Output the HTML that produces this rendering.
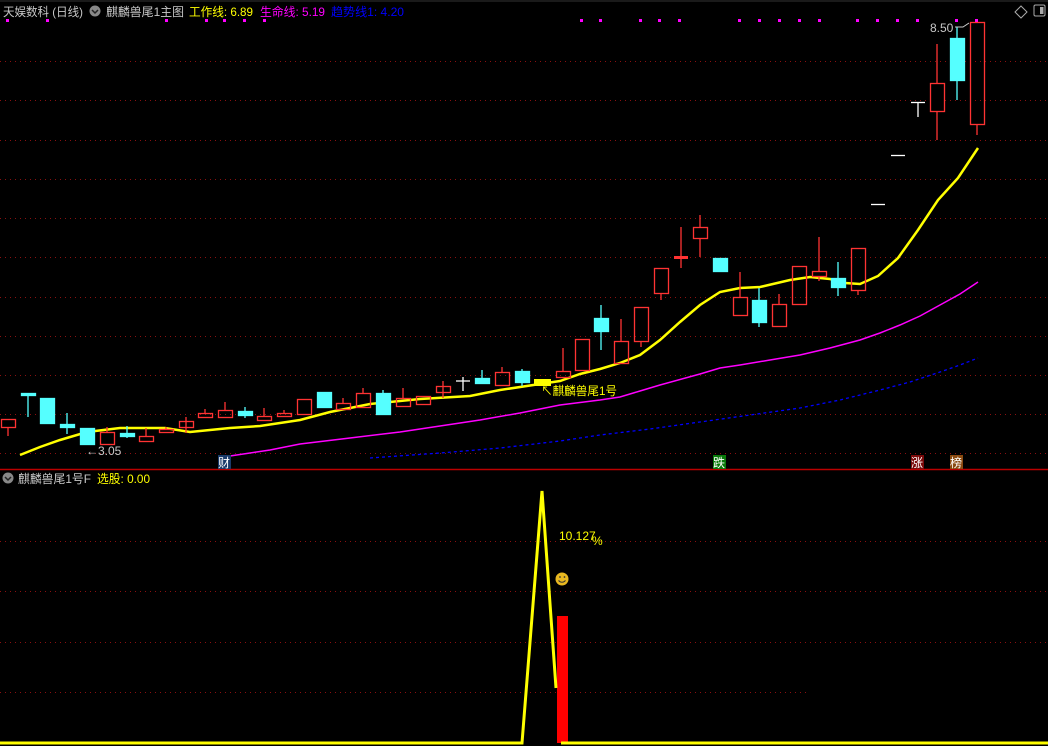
<!DOCTYPE html>
<html><head><meta charset="utf-8"><style>
html,body{margin:0;padding:0;background:#000;width:1048px;height:746px;overflow:hidden}
svg{display:block}
text{font-family:"Liberation Sans","Noto Sans CJK SC",sans-serif}
</style></head><body>
<svg width="1048" height="746" viewBox="0 0 1048 746" xmlns="http://www.w3.org/2000/svg">
<rect width="1048" height="746" fill="#000"/>
<line x1="0" y1="1" x2="1048" y2="1" stroke="#333" stroke-width="1"/>
<g stroke="#8a1010" stroke-width="1" stroke-dasharray="1 4">
<line x1="0" y1="61.5" x2="1048" y2="61.5"/><line x1="0" y1="100.5" x2="1048" y2="100.5"/><line x1="0" y1="140.5" x2="1048" y2="140.5"/><line x1="0" y1="179.5" x2="1048" y2="179.5"/><line x1="0" y1="218.5" x2="1048" y2="218.5"/><line x1="0" y1="257.5" x2="1048" y2="257.5"/><line x1="0" y1="297.5" x2="1048" y2="297.5"/><line x1="0" y1="336.5" x2="1048" y2="336.5"/><line x1="0" y1="375.5" x2="1048" y2="375.5"/><line x1="0" y1="414.5" x2="1048" y2="414.5"/><line x1="0" y1="453.5" x2="1048" y2="453.5"/>
<line x1="0" y1="541.5" x2="1048" y2="541.5"/><line x1="0" y1="591.5" x2="1048" y2="591.5"/><line x1="0" y1="642.5" x2="1048" y2="642.5"/><line x1="0" y1="692.5" x2="810" y2="692.5"/>
</g>
<line x1="0" y1="469.5" x2="1048" y2="469.5" stroke="#b00" stroke-width="1.5"/>

<!-- header -->
<text x="3" y="16" font-size="12" fill="#c8c8c8" textLength="80" lengthAdjust="spacingAndGlyphs">天娱数科 (日线)</text>
<circle cx="95" cy="11" r="5.5" fill="#888"/><path d="M92 10 l3 3 l3 -3" stroke="#222" stroke-width="1.5" fill="none"/>
<text x="106" y="16" font-size="12" fill="#c8c8c8" textLength="78" lengthAdjust="spacingAndGlyphs">麒麟兽尾1主图</text>
<text x="189" y="16" font-size="12" fill="#ffff00" textLength="64" lengthAdjust="spacingAndGlyphs">工作线: 6.89</text>
<text x="260" y="16" font-size="12" fill="#ff00ff" textLength="65" lengthAdjust="spacingAndGlyphs">生命线: 5.19</text>
<text x="331" y="16" font-size="12" fill="#0000ff" textLength="73" lengthAdjust="spacingAndGlyphs">趋势线1: 4.20</text>
<g fill="#ff00ff">
<rect x="6" y="19" width="3" height="3"/><rect x="46" y="19" width="3" height="3"/><rect x="165" y="19" width="3" height="3"/><rect x="205" y="19" width="3" height="3"/><rect x="223" y="19" width="3" height="3"/><rect x="243" y="19" width="3" height="3"/><rect x="263" y="19" width="3" height="3"/>
<rect x="580" y="19" width="3" height="3"/><rect x="599" y="19" width="3" height="3"/><rect x="639" y="19" width="3" height="3"/><rect x="658" y="19" width="3" height="3"/><rect x="678" y="19" width="3" height="3"/><rect x="738" y="19" width="3" height="3"/><rect x="758" y="19" width="3" height="3"/><rect x="778" y="19" width="3" height="3"/><rect x="798" y="19" width="3" height="3"/><rect x="818" y="19" width="3" height="3"/><rect x="856" y="19" width="3" height="3"/><rect x="876" y="19" width="3" height="3"/><rect x="896" y="19" width="3" height="3"/><rect x="916" y="19" width="3" height="3"/><rect x="955" y="19" width="3" height="3"/><rect x="975" y="19" width="3" height="3"/>
</g>
<path d="M1021 6 l6 6 l-6 6 l-6 -6z" stroke="#aaa" fill="none"/>
<rect x="1034" y="5" width="11" height="11" rx="1.5" stroke="#aaa" fill="none"/><rect x="1040" y="7" width="3.5" height="7" fill="#aaa"/>

<!-- lines -->
<polyline fill="none" stroke="#0000ff" stroke-width="1.3" stroke-dasharray="3 3" points="370,458 440,453 500,448 560,441 600,435 650,429 700,422 750,415 800,408 840,400 880,390 910,382 940,372 960,365 978,358"/>
<polyline fill="none" stroke="#ff00ff" stroke-width="1.5" points="230,456 270,450 300,444 350,438 400,432 440,426 480,420 520,413 560,405 600,400 620,397 640,391 660,385 700,374 720,368 740,365 770,360 800,355 830,348 860,340 880,333 900,325 920,316 940,305 960,294 978,282"/>
<polyline fill="none" stroke="#ffff00" stroke-width="2.5" points="20,455 40,447 60,440 87,432 120,428 165,428 190,432 230,428 260,426 300,420 330,412 370,404 420,399 470,396 500,390 540,384 560,381 580,374 600,369 620,363 640,355 660,340 680,322 700,305 720,292 740,288 760,287 790,280 810,277 830,279 845,283 860,284 878,276 898,258 918,230 938,200 958,178 978,148"/>

<!-- candles -->
<g stroke-width="1.3">
<g stroke="#ff3333" fill="none">
<line x1="8" y1="428" x2="8" y2="436"/><rect x="1.5" y="419.5" width="14" height="8"/>
<line x1="107" y1="427" x2="107" y2="432"/><rect x="100.5" y="432.5" width="14" height="12"/>
<line x1="146" y1="428" x2="146" y2="436"/><rect x="139.5" y="436.5" width="14" height="5"/>
<line x1="166" y1="427" x2="166" y2="429"/><rect x="159.5" y="429.5" width="14" height="3"/>
<line x1="186" y1="417" x2="186" y2="433"/><rect x="179.5" y="421.5" width="14" height="6"/>
<line x1="205" y1="409" x2="205" y2="413"/><rect x="198.5" y="413.5" width="14" height="4"/>
<line x1="225" y1="402" x2="225" y2="410"/><rect x="218.5" y="410.5" width="14" height="7"/>
<line x1="264" y1="408" x2="264" y2="416"/><rect x="257.5" y="416.5" width="14" height="4"/>
<line x1="284" y1="410" x2="284" y2="413"/><rect x="277.5" y="413.5" width="14" height="3"/>
<rect x="297.5" y="399.5" width="14" height="15"/>
<line x1="343" y1="398" x2="343" y2="403"/><rect x="336.5" y="403.5" width="14" height="6"/>
<line x1="363" y1="388" x2="363" y2="393"/><rect x="356.5" y="393.5" width="14" height="14"/>
<line x1="403" y1="388" x2="403" y2="398"/><rect x="396.5" y="398.5" width="14" height="8"/>
<rect x="416.5" y="396.5" width="14" height="8"/>
<line x1="443" y1="381" x2="443" y2="398"/><rect x="436.5" y="386.5" width="14" height="6"/>
<line x1="502" y1="367" x2="502" y2="372"/><rect x="495.5" y="372.5" width="14" height="13"/>
<line x1="563" y1="348" x2="563" y2="371"/><rect x="556.5" y="371.5" width="14" height="6"/>
<rect x="575.5" y="339.5" width="14" height="31"/>
<line x1="621" y1="319" x2="621" y2="341"/><rect x="614.5" y="341.5" width="14" height="22"/>
<line x1="641" y1="341" x2="641" y2="347"/><rect x="634.5" y="307.5" width="14" height="34"/>
<line x1="661" y1="293" x2="661" y2="300"/><rect x="654.5" y="268.5" width="14" height="25"/>
<line x1="681" y1="227" x2="681" y2="268"/>
<line x1="700" y1="215" x2="700" y2="257"/><rect x="693.5" y="227.5" width="14" height="11" fill="#000"/>
<line x1="740" y1="272" x2="740" y2="297"/><rect x="733.5" y="297.5" width="14" height="18"/>
<line x1="779" y1="294" x2="779" y2="304"/><rect x="772.5" y="304.5" width="14" height="22"/>
<rect x="792.5" y="266.5" width="14" height="38"/>
<line x1="819" y1="237" x2="819" y2="281"/><rect x="812.5" y="271.5" width="14" height="5" fill="#000"/>
<line x1="858" y1="290" x2="858" y2="295"/><rect x="851.5" y="248.5" width="14" height="42"/>
<line x1="937" y1="44" x2="937" y2="140"/><rect x="930.5" y="83.5" width="14" height="28" fill="#000"/>
<line x1="977" y1="124" x2="977" y2="135"/><rect x="970.5" y="22.5" width="14" height="102"/>
</g>
<rect x="674" y="256" width="14" height="3" fill="#ff3333"/>
<g fill="#55ffff" stroke="#55ffff">
<line x1="28" y1="396" x2="28" y2="417"/><rect x="21.5" y="393.5" width="14" height="2"/>
<rect x="40.5" y="398.5" width="14" height="25"/>
<line x1="67" y1="413" x2="67" y2="434"/><rect x="60.5" y="424.5" width="14" height="3"/>
<rect x="80.5" y="428.5" width="14" height="16"/>
<line x1="127" y1="426" x2="127" y2="438"/><rect x="120.5" y="433.5" width="14" height="3"/>
<line x1="245" y1="407" x2="245" y2="418"/><rect x="238.5" y="411.5" width="14" height="4"/>
<rect x="317.5" y="392.5" width="14" height="15"/>
<line x1="383" y1="390" x2="383" y2="415"/><rect x="376.5" y="393.5" width="14" height="21"/>
<line x1="482" y1="370" x2="482" y2="378"/><rect x="475.5" y="378.5" width="14" height="5"/>
<line x1="522" y1="369" x2="522" y2="386"/><rect x="515.5" y="371.5" width="14" height="11"/>
<line x1="601" y1="305" x2="601" y2="350"/><rect x="594.5" y="318.5" width="14" height="13"/>
<rect x="713.5" y="258.5" width="14" height="13"/>
<line x1="759" y1="288" x2="759" y2="327"/><rect x="752.5" y="300.5" width="14" height="22"/>
<line x1="838" y1="262" x2="838" y2="296"/><rect x="831.5" y="278.5" width="14" height="9"/>
<line x1="957" y1="27" x2="957" y2="100"/><rect x="950.5" y="38.5" width="14" height="42"/>
</g>
<g stroke="#fff">
<line x1="463" y1="377" x2="463" y2="391"/><line x1="456" y1="381" x2="470" y2="381"/>
<line x1="871" y1="204.5" x2="885" y2="204.5"/>
<line x1="891" y1="155.5" x2="905" y2="155.5"/>
<line x1="911" y1="102.5" x2="925" y2="102.5"/><line x1="918" y1="102" x2="918" y2="117"/>
</g>
<rect x="534" y="379" width="17" height="7" fill="#ffff00"/>
</g>
<text x="541" y="395" font-size="12" fill="#ffff00" textLength="76" lengthAdjust="spacingAndGlyphs">↖麒麟兽尾1号</text>
<text x="86" y="455" font-size="12" fill="#c8c8c8">←3.05</text>
<text x="930" y="32" font-size="12" fill="#c8c8c8">8.50</text>
<path d="M955 27 h8 l6 -4" stroke="#ccc" fill="none"/>
<rect x="218" y="455" width="13" height="14" fill="#1a3a6a"/><text x="218" y="467" font-size="12" fill="#fff">财</text>
<rect x="713" y="455" width="13" height="14" fill="#0a7a0a"/><text x="713" y="467" font-size="12" fill="#fff">跌</text>
<rect x="911" y="455" width="13" height="14" fill="#7a0a0a"/><text x="911" y="467" font-size="12" fill="#fff">涨</text>
<rect x="950" y="455" width="13" height="14" fill="#8a4a10"/><text x="950" y="467" font-size="12" fill="#fff">榜</text>

<!-- lower pane -->
<circle cx="8" cy="478" r="5.5" fill="#888"/><path d="M5 477 l3 3 l3 -3" stroke="#222" stroke-width="1.5" fill="none"/>
<text x="18" y="483" font-size="12" fill="#c8c8c8" textLength="73" lengthAdjust="spacingAndGlyphs">麒麟兽尾1号F</text>
<text x="97" y="483" font-size="12" fill="#ffff00" textLength="53" lengthAdjust="spacingAndGlyphs">选股: 0.00</text>
<rect x="557" y="616" width="11" height="127" fill="#ff0000"/>
<polyline fill="none" stroke="#ffff00" stroke-width="3" points="0,743 522,743 542,491 556,688"/>
<line x1="561" y1="743" x2="1048" y2="743" stroke="#ffff00" stroke-width="3"/>
<text x="559" y="540" font-size="12" fill="#ffff00">10.127</text><text x="592" y="545" font-size="12" fill="#ffff00">%</text>
<circle cx="562" cy="579" r="6.5" fill="#e8b820"/><circle cx="560" cy="577" r="0.9" fill="#333"/><circle cx="564.5" cy="577" r="0.9" fill="#333"/><path d="M558.5 580.5 q3.5 3.5 7 0" stroke="#333" fill="none" stroke-width="1"/>
</svg>
</body></html>
